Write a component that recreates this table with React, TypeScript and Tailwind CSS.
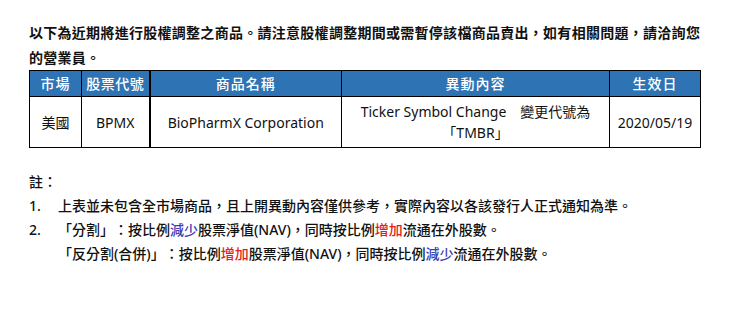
const font = "font-['Noto_Sans','Noto_Sans_CJK_TC',sans-serif]";

const rows = [
  {
    market: "美國",
    code: "BPMX",
    name: "BioPharmX Corporation",
    change: ["Ticker Symbol Change　變更代號為", "「TMBR」"],
    date: "2020/05/19",
  },
];

export default function App() {
  return (
    <div className={`${font} min-h-[326px] w-[746px] bg-white pl-[29px] pt-[20px] text-[14px] text-[#111] [text-spacing-trim:space-all]`}>
      <p className="w-[672px] font-semibold leading-[25px] tracking-[0.28px]">
        以下為近期將進行股權調整之商品。請注意股權調整期間或需暫停該檔商品賣出，如有相關問題，請洽詢您的營業員。
      </p>

      <table className="w-[672px] table-fixed border-collapse text-center">
        <thead>
          <tr className="h-[26px] bg-[#2e74b5] text-white">
            <th className="w-[52px] border border-black p-0 font-medium tracking-[1px]">市場</th>
            <th className="w-[68px] border border-black p-0 font-medium tracking-[0.5px]">股票代號</th>
            <th className="w-[192px] border border-l-2 border-black p-0 font-medium tracking-[1px]">商品名稱</th>
            <th className="w-[268px] border border-black p-0 font-medium tracking-[1px]">異動內容</th>
            <th className="border border-black p-0 font-medium tracking-[1px]">生效日</th>
          </tr>
        </thead>
        <tbody>
          {rows.map((r) => (
            <tr key={r.code} className="h-[51px]">
              <td className="border border-black p-0">{r.market}</td>
              <td className="border border-black p-0">{r.code}</td>
              <td className="border border-l-2 border-black p-0">{r.name}</td>
              <td className="border border-black p-0 leading-[21px]">
                {r.change[0]}
                <br />
                {r.change[1]}
              </td>
              <td className="border border-black p-0">{r.date}</td>
            </tr>
          ))}
        </tbody>
      </table>

      <div className="mt-[22px] font-medium leading-[24px]">
        <p>註：</p>
        <div className="flex">
          <span className="w-[29px] shrink-0">1.</span>
          <span>上表並未包含全市場商品，且上開異動內容僅供參考，實際內容以各該發行人正式通知為準。</span>
        </div>
        <div className="flex">
          <span className="w-[29px] shrink-0">2.</span>
          <div>
            <p>
              「分割」：按比例<span className="text-[#3b3bb3]">減少</span>股票淨值(NAV)，同時按比例
              <span className="text-[#e51c1c]">增加</span>流通在外股數。
            </p>
            <p>
              「反分割(合併)」：按比例<span className="text-[#e51c1c]">增加</span>股票淨值(NAV)，同時按比例
              <span className="text-[#3b3bb3]">減少</span>流通在外股數。
            </p>
          </div>
        </div>
      </div>
    </div>
  );
}
